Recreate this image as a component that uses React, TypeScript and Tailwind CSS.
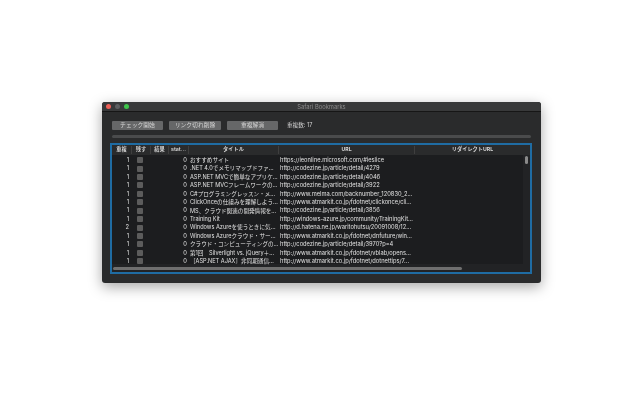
const rows = [
  { n: 1, title: 'おすすめサイト', url: 'https://ieonline.microsoft.com/#ieslice' },
  { n: 1, title: '.NET 4.0でメモリマップドファ…', url: 'http://codezine.jp/article/detail/4279' },
  { n: 1, title: 'ASP.NET MVCで簡単なアプリケ…', url: 'http://codezine.jp/article/detail/4046' },
  { n: 1, title: 'ASP.NET MVCフレームワークの…', url: 'http://codezine.jp/article/detail/3922' },
  { n: 1, title: 'C#プログラミングレッスン・メ…', url: 'http://www.melma.com/backnumber_120830_2...' },
  { n: 1, title: 'ClickOnceの仕組みを理解しよう…', url: 'http://www.atmarkit.co.jp/fdotnet/clickonce/cli...' },
  { n: 1, title: 'MS、クラウド関連の開発情報を…', url: 'http://codezine.jp/article/detail/3856' },
  { n: 1, title: 'Training Kit', url: 'http://windows-azure.jp/community/TrainingKit...' },
  { n: 2, title: 'Windows Azureを使うときに気…', url: 'http://d.hatena.ne.jp/waritohutsu/20091008/12...' },
  { n: 1, title: 'Windows Azureクラウド・サー…', url: 'http://www.atmarkit.co.jp/fdotnet/dnfuture/win...' },
  { n: 1, title: 'クラウド・コンピューティングの…', url: 'http://codezine.jp/article/detail/3970?p=4' },
  { n: 1, title: '第1回　Silverlight vs. jQuery＋…', url: 'http://www.atmarkit.co.jp/fdotnet/vblab/opens...' },
  { n: 1, title: '［ASP.NET AJAX］非同期通信…', url: 'http://www.atmarkit.co.jp/fdotnet/dotnettips/7...' },
]

const font = "font-['Inter','Noto_Sans_CJK_JP',sans-serif]"

function Btn({ label, w, ml }: { label: string; w: string; ml: string }) {
  return (
    <div className={`${w} ${ml} flex h-[9px] items-center justify-center rounded-[1px] bg-[#666768] text-[5.8px] text-[#d4d4d4]`}>
      {label}
    </div>
  )
}

export default function App() {
  return (
    <div className={`${font} min-h-[402px] bg-white pl-[102px] pt-[102px]`}>
      <div className="h-[181px] w-[439px] overflow-hidden rounded-[3px] bg-[#2a2b2c] shadow-[0_4px_14px_rgba(0,0,0,0.35)] blur-[0.3px]">
        <div className="relative flex h-[10px] items-center border-b border-[#161616] bg-[#38393a] pl-[3.5px]">
          <div className="flex gap-[3.5px]">
            <span className="h-[5.5px] w-[5.5px] rounded-full bg-[#ee5f57]" />
            <span className="h-[5.5px] w-[5.5px] rounded-full bg-[#5d5e60]" />
            <span className="h-[5.5px] w-[5.5px] rounded-full bg-[#3ec54a]" />
          </div>
          <div className="absolute inset-0 text-center text-[5.8px] leading-[10px] text-[#8b8b8b]">Safari Bookmarks</div>
        </div>

        <div className="ml-[10px] mt-[9px] flex h-[9px] items-center">
          <Btn label="チェック開始" w="w-[51px]" ml="ml-0" />
          <Btn label="リンク切れ削除" w="w-[52px]" ml="ml-[6px]" />
          <Btn label="重複解消" w="w-[51px]" ml="ml-[6px]" />
          <span className="ml-[9px] text-[5.6px] text-[#d0d0d0]">重複数: 17</span>
        </div>

        <div className="ml-[10px] mt-[5px] h-[3px] w-[419px] rounded-full bg-[#4a4b4c]" />

        <div className="ml-[8px] mt-[5px] h-[131px] w-[422px] border-2 border-[#1f6ca3] bg-[#1c1d1f]">
          <div className="flex h-[10px] items-center bg-[#2a2b2c] text-center text-[5.2px] font-bold text-[#d4d4d4]">
            <span className="w-[19px]">重複</span>
            <span className="w-[19px] border-l border-[#3f3f3f]">残す</span>
            <span className="w-[18px] border-l border-[#3f3f3f]">結果</span>
            <span className="w-[20px] border-l border-[#3f3f3f]">stat...</span>
            <span className="w-[90px] border-l border-[#3f3f3f]">タイトル</span>
            <span className="w-[136px] border-l border-[#3f3f3f]">URL</span>
            <span className="flex-1 border-l border-[#3f3f3f]">リダイレクトURL</span>
          </div>
          <div className="flex h-[109px]">
            <div className="flex-1 pt-[1px]">
              {rows.map((r) => (
                <div key={r.url} className="flex h-[8.43px] items-center text-[5.75px] text-[#e0e0e0]">
                  <span className="w-[17px] text-right">{r.n}</span>
                  <span className="ml-[8px] h-[6px] w-[6px] rounded-[1px] bg-[#5c5c5c]" />
                  <span className="ml-[40px] w-[4px] text-right">0</span>
                  <span className="ml-[3px] w-[88px] whitespace-nowrap text-[5.6px]">{r.title}</span>
                  <span className="ml-[2px] whitespace-nowrap">{r.url}</span>
                </div>
              ))}
            </div>
            <div className="w-[7px] bg-[#222325] pl-[2px] pt-[1px]">
              <div className="h-[8px] w-[3px] rounded-full bg-[#8a8a8a]" />
            </div>
          </div>
          <div className="flex h-[8px] items-center bg-[#222325] pl-[1px]">
            <div className="h-[3px] w-[349px] rounded-full bg-[#6f6f6f]" />
          </div>
        </div>
      </div>
    </div>
  )
}
